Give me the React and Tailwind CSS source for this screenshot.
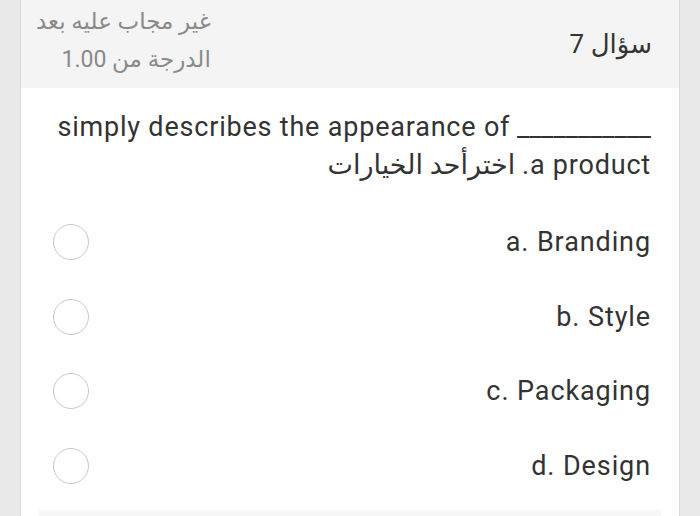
import React from 'react';

const options = ['a. Branding', 'b. Style', 'c. Packaging', 'd. Design'];

const font = { fontFamily: 'Roboto, "Noto Sans", "DejaVu Sans", sans-serif' };

const App = () => {
  return (
    <div className="w-full h-[516px] overflow-hidden bg-[#e9e9e9] px-5" style={font}>
      <div dir="rtl" className="h-full bg-white border-x border-[#dadada]">
        <div className="h-[88px] bg-[#f4f4f4] flex items-center justify-between pr-[27px] pl-[15px]">
          <div className="text-[26px] text-[#333] leading-none">سؤال 7</div>
          <div className="flex flex-col text-[23px] text-[#8a8a8a] leading-[38px] -mt-[6px]">
            <span>غير مجاب عليه بعد</span>
            <span>الدرجة من 1.00</span>
          </div>
        </div>

        <div className="pr-[28px] pl-[24px] pt-[20px] text-[27px] text-[#333] leading-[38px]">
          <div dir="ltr" className="text-right whitespace-nowrap">
            <span className="tracking-[0.8px]">simply describes the appearance of</span> ___________
          </div>
          <div>
            <span className="tracking-[0.8px]">a product.</span> اخترأحد الخيارات
          </div>
        </div>

        <div className="mt-[21px] pr-[28px] pl-[32px]">
          {options.map((opt) => (
            <label key={opt} className="h-[74.5px] flex items-center justify-between">
              <span className="text-[27px] tracking-[0.9px] text-[#333]">{opt}</span>
              <span className="w-9 h-9 rounded-full border-[1.5px] border-[#c8c8c8] bg-white" />
            </label>
          ))}
        </div>

        <div className="mt-[7px] mx-[18px] h-10 bg-[#f7f7f7]" />
      </div>
    </div>
  );
};

export default App;
